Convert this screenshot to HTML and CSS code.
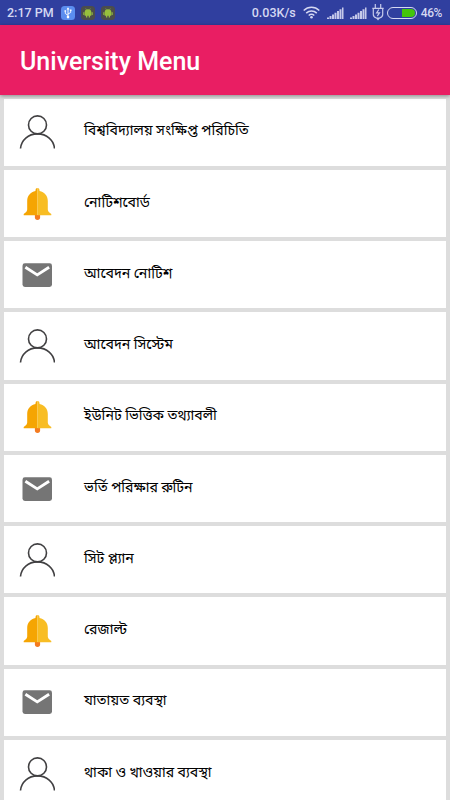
FILE: index.html
```
<!doctype html>
<html lang="bn">
    <head>
        <meta charset="utf-8">
        <title>University Menu</title>
        <link rel="stylesheet" href="styles.css">
    </head>
    <body>
        <svg class="defs" width="0" height="0">
            <symbol id="person" viewBox="-.5 -.7 36 36">
                <g fill="none" stroke="#414042" stroke-width="1.6">
                    <circle cx="18" cy="10.2" r="9" />
                    <path d="M1 33.800C1.700 25.600 8.700 19.200 18 19.200S34.300 25.600 35 33.800" />
                </g>
            </symbol>
            <symbol id="bell" viewBox="-.5 0 36 36">
                <path fill="#f47b20" d="M15.400 29h5.200v2.300a2.600 2.600 0 0 1-5.200 0z" />
                <path fill="#f5a503" d="M18 2a2 2 0 0 0-2 2v1.100C11 6 7.700 10 7.700 15v8.500c0 1.500-1 2.800-3.500 4.500v1.300H18z" />
                <path fill="#f8bd24" d="M18 2a2 2 0 0 1 2 2v1.100c5 .9 8.300 4.900 8.300 9.900v8.500c0 1.500 1 2.800 3.500 4.500v1.300H18z" />
            </symbol>
            <symbol id="mail" viewBox="-.5 0 36 36">
                <rect x="3" y="6.300" width="29.500" height="23.700" rx="2.400" fill="#757575" />
                <path d="M5.900 10.300 17.750 17.900 29.600 10.300" fill="none" stroke="#fff" stroke-width="2.900" />
            </symbol>
            <symbol id="signal" viewBox="0 0 17 12">
                <path fill="#c5c9ea" d="M0 10.500h2V12H0zM2.500 9h2v3h-2zM5 7.400h2V12H5zM7.500 5.700h2V12h-2zM10 4h2v8h-2zM12.500 2.200h2V12h-2zM15 .5h1.500V12H15z" />
            </symbol>
            <symbol id="android" viewBox="0 0 14 14">
                <rect width="14" height="14" rx="3.500" fill="#4b4d4c" />
                <path fill="#97c03d" d="M3.700 6.100a3.300 2.900 0 0 1 6.600 0zM3.700 6.100h6.600v3.700H3.700zM2.300 6.300h1v2.700h-1zM10.700 6.300h1v2.700h-1zM5 9.500h1.300v1.900H5zM7.700 9.500H9v1.900H7.700z" />
                <path stroke="#97c03d" stroke-width=".5" d="m4.600 2.400.9 1.400M9.400 2.400l-.9 1.400" />
            </symbol>
        </svg>
        <div class="screen">
            <div class="status-bar">
                <span class="clock">2:17 PM</span>
                <svg class="usb" width="14" height="14" viewBox="0 0 14 14">
                    <rect width="14" height="14" rx="3.500" fill="#5b8def" />
                    <g fill="none" stroke="#fff" stroke-width=".9">
                        <path d="M7 2.500v8M7 9.300 4.300 7.500V5.300M7 8l2.700-1.500V4.600" />
                    </g>
                    <path fill="#fff" d="m7 1.300 1.400 2.200H5.600zM3.500 4.200h1.600v1.600H3.500zM8.900 3.500h1.600v1.600H8.900z" />
                    <circle cx="7" cy="11.100" r="1.300" fill="#fff" />
                </svg>
                <svg class="android" width="14" height="14"><use href="#android" /></svg>
                <svg class="android" width="14" height="14"><use href="#android" /></svg>
                <span class="speed">0.03K/s</span>
                <svg class="wifi" width="17" height="13" viewBox="0 0 17 13">
                    <g fill="none" stroke="#d5d8f2" stroke-width="1.500">
                        <path d="M.7 4.500c4.500-4.300 11.100-4.300 15.600 0M3.200 7.100c3.100-2.900 7.500-2.900 10.600 0M5.700 9.500c1.700-1.500 3.900-1.500 5.600 0" />
                    </g>
                    <circle cx="8.500" cy="11.200" r="1.300" fill="#d5d8f2" />
                </svg>
                <svg class="signal" width="17" height="12"><use href="#signal" /></svg>
                <svg class="signal" width="17" height="12"><use href="#signal" /></svg>
                <svg class="plug" width="12" height="17" viewBox="0 0 12 17">
                    <g fill="none" stroke="#c5c9ea" stroke-width="1.200">
                        <path d="M3.300 0v4M8.700 0v4M.3 4.300h11.400M1.300 4.300v6.200c0 2 1.300 3 3.200 3.500h3c1.900-.5 3.200-1.500 3.200-3.500V4.300" />
                        <path d="M6.800 5.500 4.600 8.900h2.900L5.300 12.200" />
                    </g>
                    <path fill="#c5c9ea" d="M4 14h4l-2 2.500z" />
                </svg>
                <span class="battery"><span class="battery-level"></span></span>
                <span class="percent">46%</span>
            </div>
            <header class="toolbar">
                <h1>University Menu</h1>
            </header>
            <ul class="menu">
                <li class="item"><svg class="icon"><use href="#person" /></svg><span>বিশ্ববিদ্যালয় সংক্ষিপ্ত পরিচিতি</span></li>
                <li class="item"><svg class="icon"><use href="#bell" /></svg><span>নোটিশবোর্ড</span></li>
                <li class="item"><svg class="icon"><use href="#mail" /></svg><span>আবেদন নোটিশ</span></li>
                <li class="item"><svg class="icon"><use href="#person" /></svg><span>আবেদন সিস্টেম</span></li>
                <li class="item"><svg class="icon"><use href="#bell" /></svg><span>ইউনিট ভিত্তিক তথ্যাবলী</span></li>
                <li class="item"><svg class="icon"><use href="#mail" /></svg><span>ভর্তি পরিক্ষার রুটিন</span></li>
                <li class="item"><svg class="icon"><use href="#person" /></svg><span>সিট প্ল্যান</span></li>
                <li class="item"><svg class="icon"><use href="#bell" /></svg><span>রেজাল্ট</span></li>
                <li class="item"><svg class="icon"><use href="#mail" /></svg><span>যাতায়ত ব্যবস্থা</span></li>
                <li class="item"><svg class="icon"><use href="#person" /></svg><span>থাকা ও খাওয়ার ব্যবস্থা</span></li>
            </ul>
        </div>
    </body>
</html>
```

FILE: styles.css
```
* {
    box-sizing: border-box;
}
body {
    background: #ddd;
    font-family: Roboto, "Noto Sans", "Noto Sans Bengali", sans-serif;
    margin: 0;
}
.defs {
    display: none;
}
.screen {
    display: flex;
    flex-direction: column;
    height: 800px;
    overflow: hidden;
    width: 450px;
}
.status-bar {
    align-items: center;
    background: #303f9f;
    color: #d5d8f2;
    display: flex;
    flex: none;
    font-size: 12.5px;
    font-weight: 500;
    height: 25px;
    padding: 0 8px 0 7px;
    white-space: nowrap;
}
.status-bar svg {
    flex: none;
}
.clock {
    width: 54px;
}
.android {
    margin-left: 6px;
}
.speed {
    margin-left: auto;
}
.wifi {
    margin-left: 7px;
}
.signal {
    margin-left: 7px;
}
.signal + .signal {
    margin-left: 6px;
}
.plug {
    margin-left: 5px;
}
.battery {
    border: 1px solid #d5d8f2;
    border-radius: 6px;
    display: flex;
    height: 12px;
    justify-content: flex-end;
    margin: 0 4px 0 3px;
    padding: 1px;
    width: 30px;
}
.battery-level {
    background: #43c50b;
    border-radius: 0 4px 4px 0;
    width: 13px;
}
.percent {
    font-size: 12px;
    letter-spacing: -.4px;
}
.toolbar {
    align-items: center;
    background: #e91e63;
    box-shadow: 0 1px 4px rgba(0, 0, 0, .4);
    color: #fff;
    display: flex;
    flex: none;
    height: 70px;
    padding: 2px 20px 0;
    z-index: 1;
}
.toolbar h1 {
    font-size: 25px;
    font-weight: 500;
    margin: 0;
}
.menu {
    display: flex;
    flex-direction: column;
    gap: 4px;
    list-style: none;
    margin: 0;
    padding: 3.7px 4px 0;
}
.item {
    align-items: center;
    background: #fff;
    color: #000;
    display: flex;
    flex: none;
    font-size: 14.15px;
    height: 67.25px;
    padding-left: 15.5px;
    white-space: nowrap;
}
.item span {
    line-height: 20px;
    padding-bottom: 4px;
}
.icon {
    flex: none;
    height: 36px;
    margin-left: -.5px;
    margin-right: 29px;
    width: 36px;
}
```
